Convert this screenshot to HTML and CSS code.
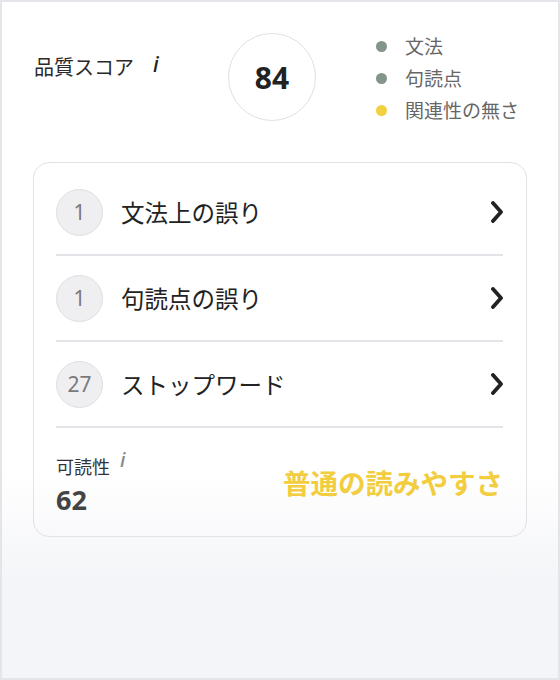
FILE: index.html
```html
<!DOCTYPE html>
<html lang="ja">
<head>
    <meta charset="UTF-8">
    <meta name="viewport" content="width=device-width, initial-scale=1.0">
    <title>品質スコア</title>
    <link rel="stylesheet" href="styles.css">
</head>
<body>
    <div class="panel">
        <div class="summary">
            <div class="score-title">品質スコア<span class="info">i</span></div>
            <div class="score-ring">84</div>
            <ul class="legend">
                <li><span class="dot dot-muted"></span>文法</li>
                <li><span class="dot dot-muted"></span>句読点</li>
                <li><span class="dot dot-warn"></span>関連性の無さ</li>
            </ul>
        </div>

        <div class="card">
            <div class="issue">
                <span class="badge">1</span>
                <span class="issue-label">文法上の誤り</span>
                <svg class="chevron" width="12" height="22" viewBox="0 0 12 22"><path d="M2 2 L10 11 L2 20"/></svg>
            </div>
            <div class="issue">
                <span class="badge">1</span>
                <span class="issue-label">句読点の誤り</span>
                <svg class="chevron" width="12" height="22" viewBox="0 0 12 22"><path d="M2 2 L10 11 L2 20"/></svg>
            </div>
            <div class="issue">
                <span class="badge">27</span>
                <span class="issue-label">ストップワード</span>
                <svg class="chevron" width="12" height="22" viewBox="0 0 12 22"><path d="M2 2 L10 11 L2 20"/></svg>
            </div>
            <div class="readability">
                <div class="readability-score">
                    <div class="readability-label">可読性<span class="info info-small">i</span></div>
                    <div class="readability-value">62</div>
                </div>
                <div class="readability-verdict">普通の読みやすさ</div>
            </div>
        </div>
    </div>
</body>
</html>
```

FILE: styles.css
```css
body {
    margin: 0;
    padding: 0;
    font-family: "Noto Sans", "Noto Sans CJK JP", sans-serif;
}

.panel {
    width: 560px;
    height: 680px;
    box-sizing: border-box;
    border: 2px solid #e4e5eb;
    background: linear-gradient(180deg, #fff 0, #fff 470px, #f4f5f8 580px, #f4f5f8 100%);
}

.summary {
    display: flex;
    align-items: flex-start;
    height: 160px;
    box-sizing: border-box;
    padding: 28px 0 0 32px;
}

.score-title {
    width: 194px;
    margin-top: 20px;
    font-size: 20px;
    line-height: 28px;
    color: #2a2a2a;
}

.info {
    display: inline-block;
    margin-left: 19px;
    font-style: italic;
    font-weight: 500;
    font-size: 21px;
    color: #222;
    vertical-align: 3px;
}

.score-ring {
    width: 88px;
    height: 88px;
    margin-top: 3px;
    box-sizing: border-box;
    border: 1.5px solid #e0e0e7;
    border-radius: 50%;
    display: flex;
    justify-content: center;
    align-items: center;
    font-size: 30px;
    font-weight: 700;
    color: #222;
}

.legend {
    list-style: none;
    margin: 0 0 0 60px;
    padding: 0;
}

.legend li {
    display: flex;
    align-items: center;
    height: 32px;
    font-size: 19px;
    color: #666;
}

.dot {
    width: 11px;
    height: 11px;
    border-radius: 50%;
    margin-right: 18px;
}

.dot-muted {
    background: #849589;
}

.dot-warn {
    background: #f1d042;
}

.card {
    margin: 0 31px;
    padding: 7px 23px 0 22px;
    border: 1.5px solid #e2e2e8;
    border-radius: 16px;
}

.issue {
    display: flex;
    align-items: center;
    height: 84px;
    border-bottom: 2px solid #e3e3e9;
}

.badge {
    width: 47px;
    height: 47px;
    box-sizing: border-box;
    border: 1.5px solid #dedee4;
    border-radius: 50%;
    background: #efeff2;
    display: flex;
    justify-content: center;
    align-items: center;
    font-size: 21px;
    color: #7a7a7a;
    margin-right: 18px;
}

.issue-label {
    flex: 1;
    font-size: 23.5px;
    color: #222;
}

.chevron path {
    fill: none;
    stroke: #222;
    stroke-width: 3.8;
    stroke-linecap: round;
    stroke-linejoin: round;
}

.readability {
    display: flex;
    justify-content: space-between;
    align-items: center;
    height: 108px;
}

.readability-label {
    font-size: 18px;
    line-height: 24px;
    color: #333;
}

.info-small {
    font-size: 20px;
    color: #888;
    margin-left: 10px;
    vertical-align: 7px;
}

.readability-value {
    margin-top: 4px;
    font-size: 27px;
    line-height: 34px;
    font-weight: 700;
    color: #444;
}

.readability-verdict {
    font-size: 27.5px;
    font-weight: 700;
    color: #f2cd3f;
}
```
